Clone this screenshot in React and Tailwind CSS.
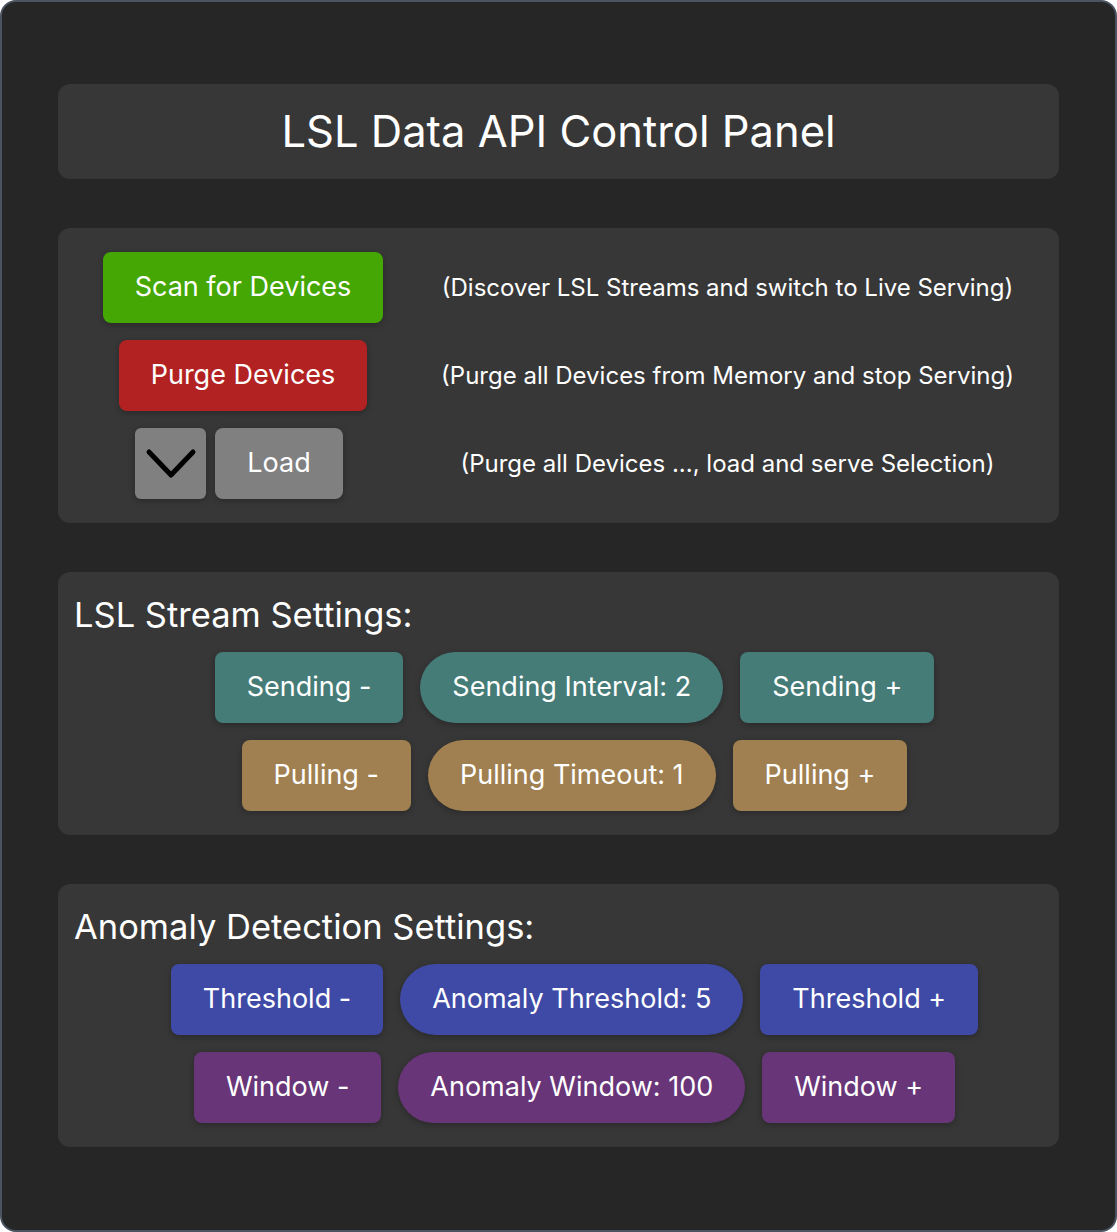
import { useState } from 'react';

const font = { fontFamily: 'Inter, "Noto Sans", sans-serif' };

function Btn({ children, className = '', pill = false }) {
  return (
    <button
      className={`flex h-[71px] items-center justify-center px-8 text-[27px] text-white shadow-[0_2px_6px_rgba(0,0,0,0.25)] ${
        pill ? 'rounded-full' : 'rounded-lg'
      } ${className}`}
    >
      {children}
    </button>
  );
}

function Stepper({ label, value, color }) {
  return (
    <div className="flex items-center justify-center gap-[17px]">
      <Btn className={color}>{label} -</Btn>
      <Btn className={color} pill>{value}</Btn>
      <Btn className={color}>{label} +</Btn>
    </div>
  );
}

export default function App() {
  const [sending] = useState(2);
  const [pulling] = useState(1);
  const [threshold] = useState(5);
  const [windowSize] = useState(100);

  return (
    <div style={font} className="h-[1232px] w-[1117px] overflow-hidden rounded-2xl border-2 border-[#4b5361] bg-[#262626] px-[56px] pt-[82px]">
      <div className="flex h-[95px] items-center justify-center rounded-xl bg-[#373737]">
        <h1 className="text-[43.5px] text-white">LSL Data API Control Panel</h1>
      </div>

      <div className="mt-[49px] flex flex-col gap-[17px] rounded-xl bg-[#373737] py-6">
        {[
          ['Scan for Devices', 'bg-[#44a704]', '(Discover LSL Streams and switch to Live Serving)'],
          ['Purge Devices', 'bg-[#b22222]', '(Purge all Devices from Memory and stop Serving)'],
          [null, '', '(Purge all Devices ..., load and serve Selection)'],
        ].map(([label, color, desc], i) => (
          <div key={i} className="flex items-center">
            <div className="flex w-[370px] justify-center">
              {label ? (
                <Btn className={color}>{label}</Btn>
              ) : (
                <div className="flex gap-[9px] pr-2">
                  <button className="flex h-[71px] w-[71px] items-center justify-center rounded-md bg-[#808080] shadow-[0_2px_6px_rgba(0,0,0,0.25)]">
                    <svg width="52" height="32" viewBox="0 0 52 32" fill="none">
                      <path d="M4 4 L26 27 L48 4" stroke="black" strokeWidth="5" strokeLinecap="round" strokeLinejoin="round" />
                    </svg>
                  </button>
                  <Btn className="bg-[#808080]">Load</Btn>
                </div>
              )}
            </div>
            <p className="flex-1 pr-8 text-center text-[24px] text-white">{desc}</p>
          </div>
        ))}
      </div>

      <div className="mt-[49px] rounded-xl bg-[#373737] pb-6 pt-[17px]">
        <h2 className="pl-4 text-[34.5px] text-white">LSL Stream Settings:</h2>
        <div className="mt-[11px] flex flex-col gap-[17px] pl-12 pr-4">
          <Stepper label="Sending" value={`Sending Interval: ${sending}`} color="bg-[#457c77]" />
          <Stepper label="Pulling" value={`Pulling Timeout: ${pulling}`} color="bg-[#a08050]" />
        </div>
      </div>

      <div className="mt-[49px] rounded-xl bg-[#373737] pb-6 pt-[17px]">
        <h2 className="pl-4 text-[34.5px] text-white">Anomaly Detection Settings:</h2>
        <div className="mt-[11px] flex flex-col gap-[17px] pl-12 pr-4">
          <Stepper label="Threshold" value={`Anomaly Threshold: ${threshold}`} color="bg-[#3e4aa5]" />
          <Stepper label="Window" value={`Anomaly Window: ${windowSize}`} color="bg-[#673578]" />
        </div>
      </div>
    </div>
  );
}
